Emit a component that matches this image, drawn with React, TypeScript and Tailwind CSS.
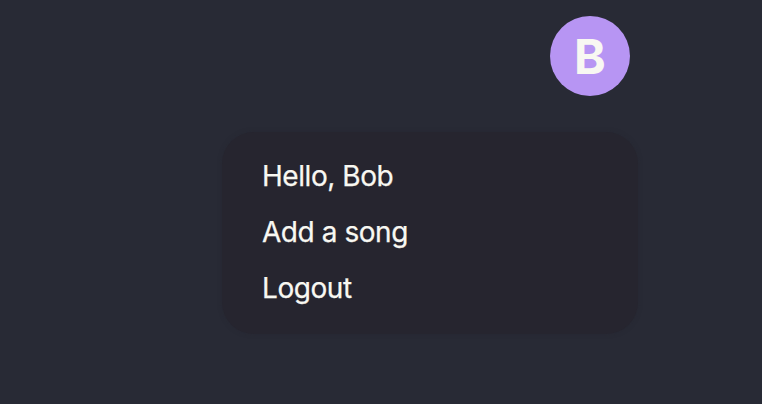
const items = ["Hello, Bob", "Add a song", "Logout"];

function Avatar({ initial }: { initial: string }) {
  return (
    <button className="mr-[132px] flex size-20 items-center justify-center rounded-full bg-[#b795f3] pt-0.5 text-[48px] leading-none font-bold text-[#f8f8f2]">
      <span>{initial}</span>
    </button>
  );
}

export default function App() {
  return (
    <div className="flex h-[404px] w-[762px] flex-col items-end overflow-hidden bg-[#282a35] pt-4 font-['Inter',sans-serif]">
      <Avatar initial="B" />
      <ul className="mt-9 mr-[124px] flex h-[202px] w-[416px] flex-col rounded-[32px] bg-[#26252f] px-10 pt-4 text-[28px] leading-[56px] tracking-[-0.45px] text-[#f8f8f2] shadow-[0_0_4px_#26252f80] [-webkit-text-stroke:0.25px_#f8f8f2]">
        {items.map((item) => (
          <li key={item}>{item}</li>
        ))}
      </ul>
    </div>
  );
}
